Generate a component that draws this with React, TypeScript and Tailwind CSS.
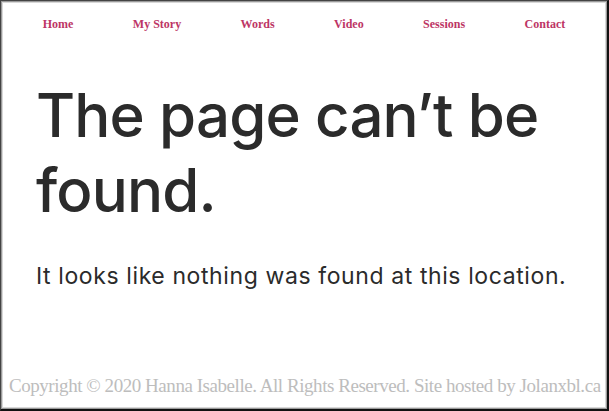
export default function App() {
  const nav = ["Home", "My Story", "Words", "Video", "Sessions", "Contact"];
  return (
    <div className="w-[609px] h-[411px] bg-white border-t border-l border-t-[#444] border-l-[#444] border-r-2 border-b-2 border-r-[#111] border-b-[#111]">
      <div className="h-full border border-[#9a9a9a]">
        <div className="h-full border border-[#d8d8d8] flex flex-col">
          <nav className="flex justify-around px-[10px] pt-[11px] h-[40px]">
            {nav.map((n) => (
              <a key={n} className="text-[12px] font-bold text-[#bd3565] leading-[20px]" style={{ fontFamily: '"Liberation Serif", serif' }}>
                {n}
              </a>
            ))}
          </nav>
          <main className="pl-[33px] pr-4 pt-[35px]" style={{ fontFamily: 'Inter, sans-serif' }}>
            <h1 className="text-[60px] leading-[75px] text-[#2b2b2b] font-medium tracking-[-0.85px]">
              The page can’t be found.
            </h1>
            <p className="mt-[33px] text-[23px] leading-[30px] text-[#2b2b2b] tracking-[0.6px]">
              It looks like nothing was found at this location.
            </p>
          </main>
          <footer className="mt-auto pl-[6px] pb-[9px] text-[19px] leading-[24px] text-[#bdbdbd] whitespace-nowrap tracking-[-0.45px]" style={{ fontFamily: '"Liberation Serif", serif' }}>
            Copyright © 2020 Hanna Isabelle. All Rights Reserved. Site hosted by Jolanxbl.ca
          </footer>
        </div>
      </div>
    </div>
  );
}
